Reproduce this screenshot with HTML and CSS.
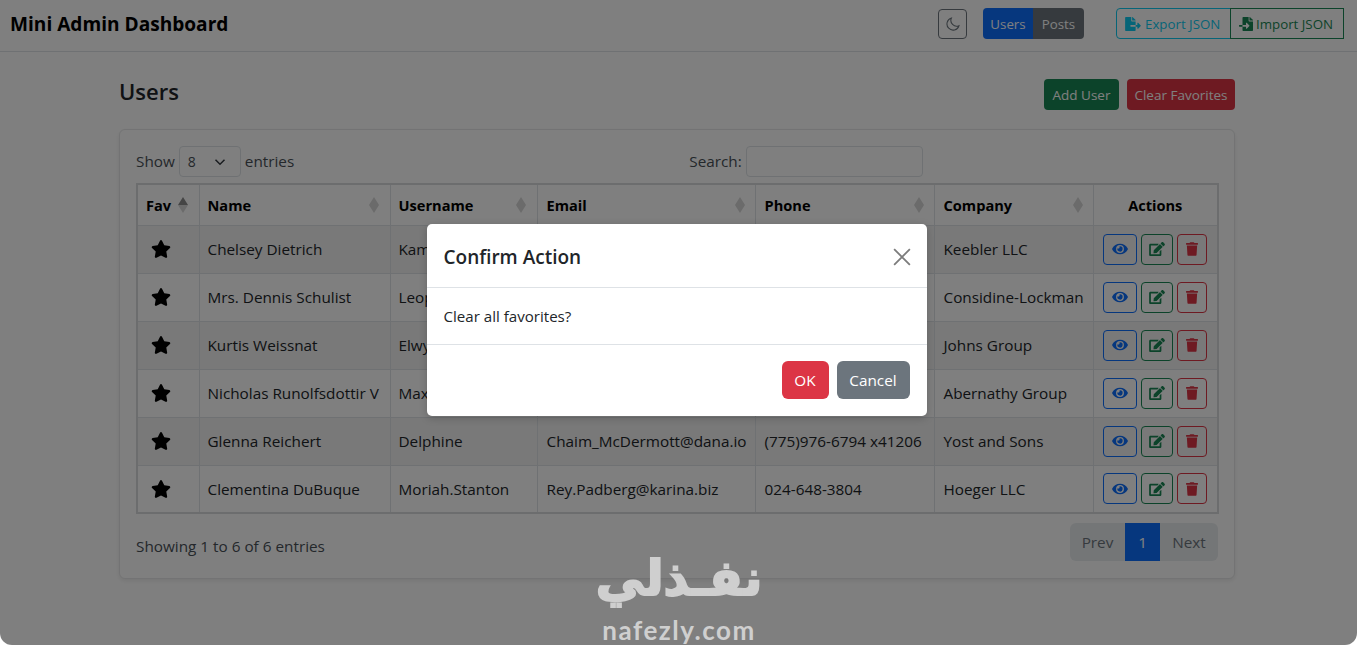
FILE: index.html
```html
<!DOCTYPE html>
<html lang="en">
<head>
<meta charset="utf-8">
<title>Mini Admin Dashboard</title>
<link rel="stylesheet" href="styles.css">
</head>
<body>
<svg class="sprite" xmlns="http://www.w3.org/2000/svg">
  <symbol id="i-star" viewBox="0 0 576 512"><path d="M259.3 17.8L194 150.2 47.9 171.5c-26.2 3.8-36.7 36.1-17.7 54.6l105.7 103-25 145.5c-4.5 26.3 23.2 46 46.4 33.7L288 439.6l130.7 68.7c23.2 12.2 50.9-7.4 46.4-33.7l-25-145.5 105.7-103c19-18.5 8.5-50.8-17.7-54.6L382 150.2 316.7 17.8c-11.7-23.6-45.6-23.9-57.4 0z"/></symbol>
  <symbol id="i-eye" viewBox="0 0 576 512"><path d="M572.52 241.4C518.29 135.59 410.93 64 288 64S57.68 135.64 3.48 241.41a32.35 32.35 0 0 0 0 29.19C57.71 376.41 165.07 448 288 448s230.32-71.64 284.52-177.41a32.35 32.35 0 0 0 0-29.19zM288 400a144 144 0 1 1 144-144 143.93 143.93 0 0 1-144 144zm0-240a95.31 95.31 0 0 0-25.31 3.79 47.85 47.85 0 0 1-66.9 66.9A95.78 95.78 0 1 0 288 160z"/></symbol>
  <symbol id="i-edit" viewBox="0 0 576 512"><path d="M402.6 83.2l90.2 90.2c3.8 3.8 3.8 10 0 13.8L274.4 405.6l-92.8 10.3c-12.4 1.4-22.9-9.1-21.5-21.5l10.3-92.8L388.8 83.2c3.8-3.8 10-3.8 13.8 0zm162-22.9l-48.8-48.8c-15.2-15.2-39.9-15.2-55.2 0l-35.4 35.4c-3.8 3.8-3.8 10 0 13.8l90.2 90.2c3.8 3.8 10 3.8 13.8 0l35.4-35.4c15.2-15.3 15.2-40 0-55.2zM384 346.2V448H64V128h229.8c3.2 0 6.2-1.3 8.5-3.5l40-40c7.6-7.6 2.2-20.5-8.5-20.5H48C21.5 64 0 85.5 0 112v352c0 26.5 21.5 48 48 48h352c26.5 0 48-21.5 48-48V306.2c0-10.7-12.9-16-20.5-8.5l-40 40c-2.2 2.3-3.5 5.3-3.5 8.5z"/></symbol>
  <symbol id="i-trash" viewBox="0 0 448 512"><path d="M432 32H312l-9.4-18.7A24 24 0 0 0 281.1 0H166.8a23.72 23.72 0 0 0-21.4 13.3L136 32H16A16 16 0 0 0 0 48v32a16 16 0 0 0 16 16h416a16 16 0 0 0 16-16V48a16 16 0 0 0-16-16zM53.2 467a48 48 0 0 0 47.9 45h245.8a48 48 0 0 0 47.9-45L416 128H32z"/></symbol>
  <symbol id="i-export" viewBox="0 0 576 512"><path d="M384 121.9c0-6.3-2.5-12.4-7-16.9L279.1 7c-4.5-4.5-10.6-7-17-7H256v128h128zM571 308l-95.7-96.4c-10.1-10.1-27.4-3-27.4 11.3V288h-64v64h64v65.2c0 14.3 17.3 21.4 27.4 11.3L571 332c6.6-6.6 6.6-17.4 0-24zm-379 28v-32c0-8.8 7.2-16 16-16h176V160H248c-13.2 0-24-10.8-24-24V0H24C10.7 0 0 10.7 0 24v464c0 13.3 10.7 24 24 24h336c13.3 0 24-10.7 24-24V352H208c-8.8 0-16-7.2-16-16z"/></symbol>
  <symbol id="i-import" viewBox="0 0 512 512"><path d="M16 288c-8.8 0-16 7.2-16 16v32c0 8.8 7.2 16 16 16h112v-64zm489-183L407.1 7c-4.5-4.5-10.6-7-17-7H384v128h128v-6.1c0-6.3-2.5-12.4-7-16.9zm-153 31V0H152c-13.3 0-24 10.7-24 24v264h128v-65.2c0-14.3 17.3-21.4 27.4-11.3L379 308c6.6 6.7 6.6 17.4 0 24l-95.7 96.4c-10.1 10.1-27.4 3-27.4-11.3V352H128v136c0 13.3 10.7 24 24 24h336c13.3 0 24-10.7 24-24V160H376c-13.2 0-24-10.8-24-24z"/></symbol>
</svg>
<div class="window">
  <header class="navbar">
    <div class="brand">Mini Admin Dashboard</div>
    <div class="nav-tools">
      <button class="btn-moon" aria-label="Toggle theme"><svg class="moon" viewBox="0 0 16 16"><path d="M6.2 1.2A7 7 0 1 0 14.8 10 6.6 6.6 0 0 1 6.2 1.2z"/></svg></button>
      <div class="seg seg-view"><span class="seg-a">Users</span><span class="seg-b">Posts</span></div>
      <div class="seg seg-json">
        <span class="json-export"><svg class="ic-export"><use href="#i-export"/></svg>Export JSON</span>
        <span class="json-import"><svg class="ic-import"><use href="#i-import"/></svg>Import JSON</span>
      </div>
    </div>
  </header>
  <main class="container">
    <div class="title-row">
      <h1 class="page-title">Users</h1>
      <div class="title-actions">
        <button class="btn btn-add">Add User</button>
        <button class="btn btn-clear">Clear Favorites</button>
      </div>
    </div>
    <section class="card">
      <div class="dt-top">
        <label class="dt-length">Show <span class="fake-select"><span>8</span><svg class="chev" viewBox="0 0 16 16"><path d="M2 5l6 6 6-6"/></svg></span> entries</label>
        <label class="dt-search">Search: <span class="fake-input"></span></label>
      </div>
      <table class="table">
        <colgroup><col class="c1"><col class="c2"><col class="c3"><col class="c4"><col class="c5"><col class="c6"><col class="c7"></colgroup>
        <thead>
          <tr>
            <th><div class="th-in">Fav<span class="sort asc"></span></div></th>
            <th><div class="th-in">Name<span class="sort"></span></div></th>
            <th><div class="th-in">Username<span class="sort"></span></div></th>
            <th class="nudge"><div class="th-in">Email<span class="sort"></span></div></th>
            <th class="nudge"><div class="th-in">Phone<span class="sort"></span></div></th>
            <th class="nudge"><div class="th-in">Company<span class="sort"></span></div></th>
            <th class="center">Actions</th>
          </tr>
        </thead>
        <tbody>
          <tr><td><svg class="star"><use href="#i-star"/></svg></td><td>Chelsey Dietrich</td><td>Kamren</td><td class="nudge">Lucio_Hettinger@annie.ca</td><td class="nudge">(254)954-1289</td><td class="nudge">Keebler LLC</td><td><div class="acts"><span class="act a-view"><svg class="ic-eye"><use href="#i-eye"/></svg></span><span class="act a-edit"><svg class="ic-edit"><use href="#i-edit"/></svg></span><span class="act a-del"><svg class="ic-trash"><use href="#i-trash"/></svg></span></div></td></tr>
          <tr><td><svg class="star"><use href="#i-star"/></svg></td><td>Mrs. Dennis Schulist</td><td>Leopoldo_Corkery</td><td class="nudge">Karley_Dach@jasper.info</td><td class="nudge">1-477-935-8478 x6430</td><td class="nudge">Considine-Lockman</td><td><div class="acts"><span class="act a-view"><svg class="ic-eye"><use href="#i-eye"/></svg></span><span class="act a-edit"><svg class="ic-edit"><use href="#i-edit"/></svg></span><span class="act a-del"><svg class="ic-trash"><use href="#i-trash"/></svg></span></div></td></tr>
          <tr><td><svg class="star"><use href="#i-star"/></svg></td><td>Kurtis Weissnat</td><td>Elwyn.Skiles</td><td class="nudge">Telly.Hoeger@billy.biz</td><td class="nudge">210.067.6132</td><td class="nudge">Johns Group</td><td><div class="acts"><span class="act a-view"><svg class="ic-eye"><use href="#i-eye"/></svg></span><span class="act a-edit"><svg class="ic-edit"><use href="#i-edit"/></svg></span><span class="act a-del"><svg class="ic-trash"><use href="#i-trash"/></svg></span></div></td></tr>
          <tr><td><svg class="star"><use href="#i-star"/></svg></td><td>Nicholas Runolfsdottir V</td><td>Maxime_Nienow</td><td class="nudge">Sherwood@rosamond.me</td><td class="nudge">586.493.6943 x140</td><td class="nudge">Abernathy Group</td><td><div class="acts"><span class="act a-view"><svg class="ic-eye"><use href="#i-eye"/></svg></span><span class="act a-edit"><svg class="ic-edit"><use href="#i-edit"/></svg></span><span class="act a-del"><svg class="ic-trash"><use href="#i-trash"/></svg></span></div></td></tr>
          <tr><td><svg class="star"><use href="#i-star"/></svg></td><td>Glenna Reichert</td><td>Delphine</td><td class="nudge">Chaim_McDermott@dana.io</td><td class="nudge">(775)976-6794 x41206</td><td class="nudge">Yost and Sons</td><td><div class="acts"><span class="act a-view"><svg class="ic-eye"><use href="#i-eye"/></svg></span><span class="act a-edit"><svg class="ic-edit"><use href="#i-edit"/></svg></span><span class="act a-del"><svg class="ic-trash"><use href="#i-trash"/></svg></span></div></td></tr>
          <tr><td><svg class="star"><use href="#i-star"/></svg></td><td>Clementina DuBuque</td><td>Moriah.Stanton</td><td class="nudge">Rey.Padberg@karina.biz</td><td class="nudge">024-648-3804</td><td class="nudge">Hoeger LLC</td><td><div class="acts"><span class="act a-view"><svg class="ic-eye"><use href="#i-eye"/></svg></span><span class="act a-edit"><svg class="ic-edit"><use href="#i-edit"/></svg></span><span class="act a-del"><svg class="ic-trash"><use href="#i-trash"/></svg></span></div></td></tr>
        </tbody>
      </table>
      <div class="dt-bottom">
        <div class="dt-info">Showing 1 to 6 of 6 entries</div>
        <div class="pager"><span class="p-prev">Prev</span><span class="p-cur">1</span><span class="p-next">Next</span></div>
      </div>
    </section>
  </main>
  <div class="backdrop">
    <div class="modal">
      <div class="modal-head">
        <div class="modal-title">Confirm Action</div>
        <svg class="close" viewBox="0 0 16 16"><path d="M1 1l14 14M15 1L1 15"/></svg>
      </div>
      <div class="modal-body">Clear all favorites?</div>
      <div class="modal-foot">
        <button class="mbtn m-ok">OK</button>
        <button class="mbtn m-cancel">Cancel</button>
      </div>
    </div>
  </div>
  <div class="watermark">
    <div class="wm-ar" dir="rtl" lang="ar">نفـذلي</div>
    <div class="wm-en">nafezly.com</div>
  </div>
</div>
</body>
</html>
```

FILE: styles.css
```css
* { box-sizing: border-box; }
html, body { margin: 0; padding: 0; background: #fff; }
body { font-family: "Open Sans", "Noto Sans", "Liberation Sans", sans-serif; font-size: 15.3px; color: #212529; }
.sprite { display: none; }
svg { display: block; fill: currentColor; }
button { font: inherit; cursor: default; }

.window { position: relative; width: 1357px; height: 645px; overflow: hidden; background: #fff; border-radius: 0 0 12px 12px; }

.navbar { height: 52px; display: flex; align-items: center; justify-content: space-between; padding: 0 13px 4px 10px; border-bottom: 1px solid #dee2e6; }
.brand { font-size: 19.1px; font-weight: 700; color: #000; }
.nav-tools { display: flex; align-items: center; }
.btn-moon { width: 29px; height: 30px; margin-right: 16px; padding: 0; display: flex; align-items: center; justify-content: center; background: transparent; border: 1px solid #6c757d; border-radius: 4px; color: #6c757d; }
.moon { width: 14px; height: 14px; fill: none; stroke: currentColor; stroke-width: 1.2; }
.seg { display: flex; height: 31px; font-size: 13.3px; }
.seg span { display: flex; align-items: center; }
.seg-view { margin-right: 32px; }
.seg-a { width: 50px; justify-content: center; background: #0d6efd; color: #fff; border-radius: 4px 0 0 4px; }
.seg-b { width: 51px; justify-content: center; background: #6c757d; color: #fff; border-radius: 0 4px 4px 0; }
.json-export { width: 115px; padding-left: 8px; gap: 4px; border: 1px solid #0dcaf0; border-radius: 4px 0 0 4px; color: #0dcaf0; }
.json-import { width: 114px; padding-left: 8px; gap: 3px; border: 1px solid #198754; margin-left: -1px; color: #198754; }
.ic-export { width: 16px; height: 14px; }
.ic-import { width: 14px; height: 14px; }

.container { width: 1116px; margin-left: 119px; padding-top: 27px; }
.title-row { display: flex; justify-content: space-between; height: 50px; }
.page-title { margin: -3px 0 0; font-size: 22px; font-weight: 600; line-height: 31px; color: #212529; }
.title-actions { display: flex; gap: 8px; height: 31px; }
.btn { height: 31px; padding: 0; font-size: 13.5px; border: 0; border-radius: 4px; color: #fff; }
.btn-add { background: #198754; width: 75px; }
.btn-clear { background: #dc3545; width: 108px; }

.card { height: 450px; border: 1px solid #e6e7e8; border-radius: 6px; padding: 16px 16px 0; box-shadow: 0 2px 4px rgba(0,0,0,.08); background: #fff; }
.dt-top { display: flex; height: 37px; }
.dt-length { display: flex; align-items: flex-start; gap: 4px; line-height: 31px; color: #495057; }
.dt-search { display: flex; align-items: flex-start; gap: 4px; line-height: 31px; margin-left: 395px; color: #495057; }
.fake-select { display: flex; align-items: center; justify-content: space-between; width: 62px; height: 31px; padding: 0 14px 0 8px; border: 1px solid #dee2e6; border-radius: 4px; font-size: 14px; color: #495057; }
.chev { width: 12px; height: 12px; fill: none; stroke: #343a40; stroke-width: 2; }
.fake-input { display: block; width: 177px; height: 31px; border: 1px solid #dee2e6; border-radius: 4px; }

.table { width: 1081px; table-layout: fixed; border-collapse: collapse; border: 2px solid #d8dadc; }
.c1 { width: 62px; } .c2 { width: 191px; } .c3 { width: 147px; } .c4 { width: 218px; } .c5 { width: 179px; } .c6 { width: 159px; } .c7 { width: 125px; }
.table th, .table td { border: 1px solid #dee2e6; padding: 0 8px; white-space: nowrap; overflow: hidden; text-align: left; color: #212529; }
.table .nudge { padding-left: 9px; padding-right: 7px; }
.table th { height: 41px; font-size: 14.6px; font-weight: 700; color: #000; }
.table td { height: 48px; }
.table tbody tr:nth-child(odd) td { background: #f2f2f2; }
.table .center { text-align: center; }
.th-in { display: flex; align-items: center; justify-content: space-between; }
.sort { width: 10px; height: 16px; display: flex; flex-direction: column; justify-content: center; margin-right: 3px; }
.sort::before, .sort::after { content: ""; display: block; width: 0; height: 0; border-left: 5px solid transparent; border-right: 5px solid transparent; }
.sort::before { border-bottom: 8px solid #d6d6d6; }
.sort::after { border-top: 8px solid #d6d6d6; }
.sort.asc::before { border-bottom-color: #8a8a8a; }
.star { width: 20px; height: 18px; margin-left: 5px; color: #000; }
.acts { display: flex; gap: 4px; padding-left: 1px; }
.act { height: 31px; display: flex; align-items: center; justify-content: center; border: 1px solid; border-radius: 4px; }
.a-view { width: 34px; color: #0d6efd; border-color: #0d6efd; }
.a-edit { width: 32px; color: #198754; border-color: #198754; }
.a-del { width: 30px; color: #dc3545; border-color: #dc3545; }
.ic-eye { width: 16px; height: 14px; }
.ic-edit { width: 16px; height: 14px; }
.ic-trash { width: 12px; height: 14px; }

.dt-bottom { display: flex; justify-content: space-between; align-items: center; width: 1082px; height: 38px; margin-top: 9px; }
.dt-info { padding-top: 8px; color: #495057; }
.pager { display: flex; height: 38px; background: #e9ecef; border-radius: 6px; overflow: hidden; color: #6c757d; }
.pager span { display: flex; align-items: center; justify-content: center; }
.p-prev { width: 55px; }
.p-cur { width: 35px; background: #0d6efd; color: #fff; }
.p-next { width: 58px; }

.backdrop { position: absolute; inset: 0; background: rgba(0,0,0,.5); display: flex; align-items: center; justify-content: center; }
.modal { width: 500px; height: 192px; background: #fff; border-radius: 5px; box-shadow: 0 2px 8px rgba(0,0,0,.2); margin-left: -4px; margin-top: -5px; display: flex; flex-direction: column; color: #212529; }
.modal-head { height: 64px; display: flex; align-items: center; justify-content: space-between; padding: 2px 16px 0 17px; border-bottom: 1px solid #dee2e6; }
.modal-title { font-size: 19px; font-weight: 600; color: #212529; }
.close { width: 18px; height: 18px; fill: none; stroke: #7c7c7c; stroke-width: 1.6; }
.modal-body { height: 57px; padding: 0 17px; display: flex; align-items: center; border-bottom: 1px solid #dee2e6; font-size: 15.1px; }
.modal-foot { flex: 1; display: flex; justify-content: flex-end; align-items: center; gap: 8px; padding: 0 17px 1px; }
.mbtn { height: 38px; border: 0; border-radius: 6px; color: #fff; padding: 0; font-size: 15.3px; }
.m-ok { width: 47px; background: #dc3545; }
.m-cancel { width: 73px; background: #6c757d; }

.watermark { position: absolute; left: 590px; top: 548px; width: 178px; text-align: center; color: #cfcfcf; }
.wm-ar { font-family: "DejaVu Sans", sans-serif; font-weight: 700; font-size: 49px; line-height: 62px; white-space: nowrap; -webkit-text-stroke: 2px #cfcfcf; }
.wm-en { font-family: "Lato", sans-serif; font-weight: 700; font-size: 26px; line-height: 26px; letter-spacing: 1.5px; margin-top: 7px; white-space: nowrap; }
```
